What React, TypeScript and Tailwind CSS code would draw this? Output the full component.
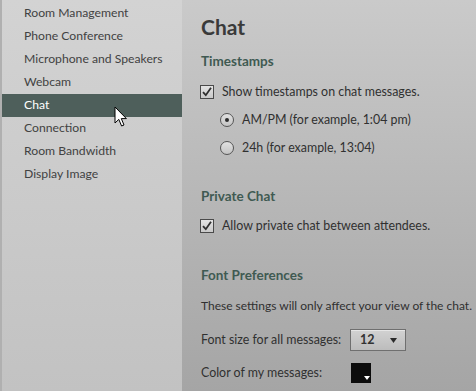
import React from 'react';

const font = { fontFamily: 'Lato, "Noto Sans", sans-serif' };

const navItems = [
  'Room Management',
  'Phone Conference',
  'Microphone and Speakers',
  'Webcam',
  'Chat',
  'Connection',
  'Room Bandwidth',
  'Display Image',
];

function Checkbox() {
  return (
    <div className="w-[14px] h-[14px] border border-[#4a4a4a] bg-gradient-to-b from-[#e4e4e4] to-[#c9c9c9] flex items-center justify-center shrink-0">
      <svg width="12" height="12" viewBox="0 0 12 12">
        <path d="M2 6.2 L4.8 9.2 L10 1.8" fill="none" stroke="#2f2f2f" strokeWidth="1.8" />
      </svg>
    </div>
  );
}

function Radio({ checked }: { checked: boolean }) {
  return (
    <div className="w-[14px] h-[14px] rounded-full border border-[#555] bg-gradient-to-b from-[#e2e2e2] to-[#c4c4c4] flex items-center justify-center shrink-0">
      {checked && <div className="w-[4px] h-[4px] rounded-full bg-[#2b2b2b]" />}
    </div>
  );
}

function SectionTitle({ children, className }: { children: React.ReactNode; className: string }) {
  return (
    <div className={'h-[20px] flex items-center text-[13.5px] font-bold text-[#3f5a52] leading-none ' + className}>
      {children}
    </div>
  );
}

export default function App() {
  return (
    <div className="flex h-[391px] w-[476px] overflow-hidden text-[#303030]" style={font}>
      {/* Sidebar */}
      <div className="relative w-[182px] h-full bg-[#b0b0b0] pl-[2px]">
        <div className="h-full bg-gradient-to-b from-[#d3d3d3] to-[#c2c2c2] pt-[2px]">
          {navItems.map((item) => (
            <div
              key={item}
              className={
                'h-[23px] flex items-center pl-[22px] text-[12.2px] ' +
                (item === 'Chat' ? 'bg-[#4e5f5b] text-white' : 'text-[#424242]')
              }
            >
              {item}
            </div>
          ))}
        </div>
        {/* mouse cursor */}
        <svg className="absolute left-[114px] top-[106px]" width="14" height="22" viewBox="0 0 14 22">
          <path d="M1 1 L1 17 L4.8 13.4 L7.6 20 L10 19 L7.3 12.6 L12.4 12.6 Z" fill="white" stroke="black" strokeWidth="1" />
        </svg>
      </div>

      {/* Content */}
      <div className="flex-1 h-full bg-gradient-to-b from-[#cacaca] to-[#a5a5a5] pl-[19px] pt-[16px] text-[12.4px] leading-none">
        <div className="h-[20px] flex items-center text-[21px] font-bold text-[#3a3a3a]">Chat</div>

        <SectionTitle className="mt-[16px]">Timestamps</SectionTitle>
        <div className="mt-[10px] h-[20px] flex items-center gap-[8px] -ml-[1px]">
          <Checkbox />
          <span>Show timestamps on chat messages.</span>
        </div>
        <div className="mt-[8px] h-[20px] ml-[19px] flex items-center gap-[8px]">
          <Radio checked />
          <span>AM/PM (for example, 1:04 pm)</span>
        </div>
        <div className="mt-[8px] h-[20px] ml-[19px] flex items-center gap-[8px]">
          <Radio checked={false} />
          <span>24h (for example, 13:04)</span>
        </div>

        <SectionTitle className="mt-[29px]">Private Chat</SectionTitle>
        <div className="mt-[9px] h-[20px] flex items-center gap-[8px] -ml-[1px]">
          <Checkbox />
          <span>Allow private chat between attendees.</span>
        </div>

        <SectionTitle className="mt-[30px]">Font Preferences</SectionTitle>
        <div className="mt-[10px] h-[20px] flex items-center text-[12px]">
          These settings will only affect your view of the chat.
        </div>

        <div className="mt-[14px] h-[20px] flex items-center">
          <span className="w-[149px]">Font size for all messages:</span>
          <div className="w-[56px] h-[22px] border border-[#6f6f6f] bg-gradient-to-b from-[#d2d2d2] to-[#bcbcbc] shadow-[inset_0_1px_0_#e6e6e6] flex items-center pl-[9px] pr-[8px] justify-between">
            <span className="font-bold text-[12.5px] text-[#333]">12</span>
            <svg width="7" height="5" viewBox="0 0 7 5">
              <path d="M0 0 L7 0 L3.5 5 Z" fill="#2a2a2a" />
            </svg>
          </div>
        </div>

        <div className="mt-[13px] h-[20px] flex items-center">
          <span className="w-[150px]">Color of my messages:</span>
          <div className="w-[20px] h-[20px] bg-[#0c0c0c] relative">
            <svg className="absolute left-[13px] top-[13px]" width="6" height="4" viewBox="0 0 6 4">
              <path d="M0 0 L6 0 L3 4 Z" fill="white" />
            </svg>
          </div>
        </div>
      </div>
    </div>
  );
}
